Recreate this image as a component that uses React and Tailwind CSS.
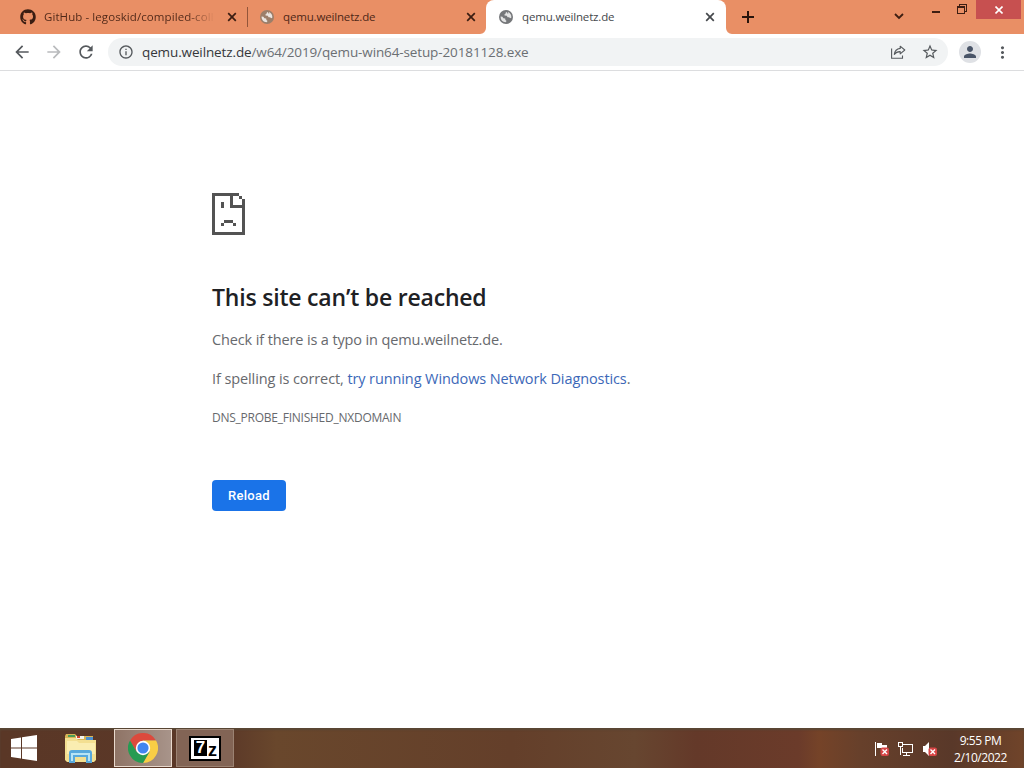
import React from 'react';
import { FaGithub } from 'react-icons/fa';
import {
  MdArrowBack,
  MdArrowForward,
  MdInfoOutline,
  MdMoreVert,
  MdPerson,
  MdRefresh,
  MdStarOutline,
} from 'react-icons/md';

const Globe = ({ className }) => (
  <svg viewBox="0 0 14 14" className={className}>
    <circle cx="7" cy="7" r="7" fill="currentColor" />
    <path
      d="M8 1.9C7 2.2 6.3 2.9 6.5 3.9L5.3 4.6L5.6 5.6L7.8 5.8L8.6 7.2H10.2L11 8.3L12.3 7.8C12.7 5.2 11.2 2.8 8.9 2L9.4 3.4L8.4 3.6ZM1.6 6.5C1.4 9.6 3.4 12 6.6 12.3L7.6 10.9L6.4 10L6.2 8.4L4.4 8.2L3.4 6.8Z"
      fill="#fff"
      fillOpacity="0.8"
    />
  </svg>
);

const SadFile = () => (
  <svg width="33" height="42" viewBox="0 0 11 14" fill="#535353" shapeRendering="crispEdges">
    <path d="M0 0H9V1H7V4H11V5H6V1H1V13H10V5H11V14H0Z" />
    <path d="M9 1H10V2H9ZM10 2H11V5H10Z" />
    <path d="M3 3H4V5H3ZM4 9H7V10H4ZM3 10H4V11H3ZM7 10H8V11H7Z" />
  </svg>
);

const CloseTab = () => (
  <svg width="10" height="10" viewBox="0 0 10 10" stroke="currentColor" strokeWidth="1.7">
    <path d="M1.2 1.2L8.8 8.8M8.8 1.2L1.2 8.8" />
  </svg>
);

const TabStrip = () => (
  <div className="flex h-[34px] bg-[#e98f65] text-[11.5px] text-[#4f2717]">
    <div className="flex h-[34px] w-[247px] items-center pl-5">
      <FaGithub className="size-4 text-[#3a1d12]" />
      <div className="ml-2 w-[174px] whitespace-nowrap bg-gradient-to-r from-[#4f2717] from-82% to-[#e98f65] to-98% bg-clip-text text-transparent tracking-[0.08px]">
        GitHub - legoskid/compiled-coll
      </div>
      <div className="ml-[9px] text-[#3a1d12]">
        <CloseTab />
      </div>
    </div>
    <div className="mt-[7px] h-5 w-px bg-[#92553a]" />
    <div className="flex h-[34px] w-[238px] items-center pl-3">
      <Globe className="size-[14px] text-[#9c7e69]" />
      <div className="ml-[9px] w-[183px] tracking-[-0.16px]">qemu.weilnetz.de</div>
      <div className="text-[#3a1d12]">
        <CloseTab />
      </div>
    </div>
    <div className="relative flex h-[34px] w-[240px] items-center rounded-t-lg bg-white pl-[13px] text-[#45484c]">
      <svg className="absolute bottom-0 -left-1.5" width="6" height="6" fill="#fff">
        <path d="M6 0V6H0A6 6 0 0 0 6 0Z" />
      </svg>
      <svg className="absolute -right-1.5 bottom-0" width="6" height="6" fill="#fff">
        <path d="M0 0V6H6A6 6 0 0 1 0 0Z" />
      </svg>
      <Globe className="size-[14px] text-[#75777a]" />
      <div className="ml-[9px] w-[183px] tracking-[-0.16px]">qemu.weilnetz.de</div>
      <CloseTab />
    </div>
    <div className="flex w-11 items-center justify-center text-[#28140c]">
      <svg width="12" height="12" viewBox="0 0 12 12" stroke="currentColor" strokeWidth="2">
        <path d="M6 0V12M0 6H12" />
      </svg>
    </div>
    <div className="ml-auto flex text-[#3d1e12]">
      <svg className="mt-[13px] mr-7" width="10" height="7" fill="none" stroke="currentColor" strokeWidth="1.8">
        <path d="M1 1L5 5L9 1" />
      </svg>
      <div className="mt-[11px] mr-[17px] h-[2px] w-2 bg-[#3d1e12]" />
      <svg className="mt-1 mr-[9px]" width="10" height="10" fill="none" stroke="currentColor" shapeRendering="crispEdges">
        <path d="M.5 2.5H7.5V9.5H.5ZM.5 3.5H7.5M2.5 2V.5H9.5V7.5H8" />
      </svg>
      <div className="mr-[3px] flex h-[19px] w-[45px] items-center justify-center bg-[#c75050] text-white">
        <svg width="8" height="8" stroke="currentColor" strokeWidth="1.6">
          <path d="M.5 .5L7.5 7.5M7.5 .5L.5 7.5" />
        </svg>
      </div>
    </div>
  </div>
);

const Toolbar = () => (
  <div className="flex h-[37px] items-center border-b border-[#dcdddf] bg-white pl-3 text-[#55595d]">
    <MdArrowBack className="size-5" />
    <MdArrowForward className="ml-3 size-5 text-[#b9bbbd]" />
    <MdRefresh className="ml-3 size-5" />
    <div className="ml-3 flex h-7 w-[840px] items-center rounded-full bg-[#f1f3f4] pl-[10px]">
      <MdInfoOutline className="size-4" />
      <div className="ml-2 text-[13.5px] text-[#6b6f73] tracking-[-0.12px]">
        <span className="text-[#35373a]">qemu.weilnetz.de</span>/w64/2019/qemu-win64-setup-20181128.exe
      </div>
      <svg className="mr-[15px] ml-auto" width="16" height="16" viewBox="0 0 16 16" fill="none" stroke="currentColor" strokeWidth="1.1">
        <path d="M1.6 4.5V14.2H12.5V11.5" />
        <path d="M10.2 2.2L14.8 6L10.2 9.8V7.6C7.6 7.5 5.7 8.4 4.3 10.4C4.7 7 6.7 4.8 10.2 4.4Z" strokeLinejoin="round" />
      </svg>
      <MdStarOutline className="mr-[9px] size-[18px]" />
    </div>
    <div className="ml-[11px] flex size-[22px] items-center justify-center rounded-full bg-[#dfe1e5]">
      <MdPerson className="size-[18px] text-[#4a5568]" />
    </div>
    <MdMoreVert className="ml-3 size-[19px]" />
  </div>
);

const ErrorPage = () => (
  <div className="flex h-[657px] flex-col items-start bg-white pt-[122px] pl-[212px] text-[#67696d]">
    <SadFile />
    <h1 className="mt-[46px] h-8 text-[23px] leading-8 font-semibold whitespace-nowrap text-[#202124] tracking-[-0.2px]">
      This site can’t be reached
    </h1>
    <p className="mt-[15px] h-6 text-[14.5px] leading-6 whitespace-nowrap tracking-[-0.13px]">
      Check if there is a typo in qemu.weilnetz.de.
    </p>
    <p className="mt-[15px] h-6 text-[14.5px] leading-6 whitespace-nowrap tracking-[-0.1px]">
      If spelling is correct, <span className="text-[#3c68b8]">try running Windows Network Diagnostics</span>.
    </p>
    <p className="mt-[15px] h-6 text-xs leading-6 whitespace-nowrap tracking-[-0.25px]">DNS_PROBE_FINISHED_NXDOMAIN</p>
    <button className="mt-[50px] h-[31px] w-[74px] rounded bg-[#1a73e8] font-['Roboto',sans-serif] text-[13px] font-medium text-white tracking-[0.3px]">
      Reload
    </button>
  </div>
);

const ExplorerIcon = () => (
  <svg width="34" height="32" viewBox="0 0 34 32">
    <path d="M1 4L2 2H11L13 4H29V9H1Z" fill="#d9b456" />
    <path d="M4 3H11V5H4Z" fill="#4b9b57" />
    <path d="M12 4H20V7H12Z" fill="#f4f5ee" />
    <path d="M13 4H16V6H13Z" fill="#cf4430" />
    <path d="M22 5H29V8H22Z" fill="#4d91cf" />
    <path d="M1 6H12L14 8H32V28L30 30H3L1 28Z" fill="#f3df91" />
    <path d="M3 9H13L15 11H31V22H3Z" fill="#faedb1" />
    <path d="M5 31V21Q5 18 8 18H25Q28 18 28 21V31H22V25H11V31Z" fill="#58a9dc" />
    <path d="M7 29V21H26V29H24V23H9V29Z" fill="#b7e4f5" />
  </svg>
);

const ChromeIcon = () => (
  <svg width="30" height="30" viewBox="0 0 30 30">
    <path d="M2 7.5A15 15 0 0 1 28 7.5H15L8.5 18.8Z" fill="#dc4a3d" />
    <path d="M28 7.5A15 15 0 0 1 15 30L21.5 18.8L15 7.5Z" fill="#f9ce45" />
    <path d="M2 7.5A15 15 0 0 0 15 30L21.5 18.8H8.5Z" fill="#269b52" />
    <circle cx="15" cy="15" r="7.2" fill="#fff" />
    <circle cx="15" cy="15" r="5.6" fill="#4286f0" />
  </svg>
);

const RedCross = () => (
  <g>
    <rect x="6.5" y="6.5" width="8.5" height="8.5" rx="2" fill="#d64545" />
    <path d="M8.5 8.5L13 13M13 8.5L8.5 13" stroke="#fff" strokeWidth="1.4" />
  </g>
);

const Taskbar = () => (
  <div className="flex h-10 items-center bg-linear-[90deg,#5a3726_0%,#5b3828_22%,#69472c_27%,#643f2a_50%,#674630_62%,#643929_68%,#6b3b2a_78%,#754328_80%,#67402b_84%,#593829_93%,#70442a_100%] shadow-[inset_0_2px_2px_#594735]">
    <svg className="ml-[10px]" width="27" height="26" viewBox="0 0 27 26" fill="#fff">
      <path d="M1 4L11 2.5V12.5H1ZM12 2.3L27 0V12.5H12ZM1 13.5H11V23.5L1 22ZM12 13.5H27V26L12 23.7Z" />
    </svg>
    <div className="ml-[27px]">
      <ExplorerIcon />
    </div>
    <div className="ml-4 flex h-[38px] w-[58px] items-center justify-center border border-[#e9d9cd] bg-linear-[90deg,#8f7466,#a8948a]">
      <ChromeIcon />
    </div>
    <div className="ml-1 flex h-[38px] w-[58px] items-center justify-center border border-[#9b8272] bg-[#826455]">
      <div className="flex h-[25px] w-8 items-center border-2 border-black bg-white pl-[3px]">
        <div className="flex h-4 w-[13px] items-center justify-center bg-black font-['Liberation_Sans',sans-serif] text-[17px] leading-4 font-bold text-white">
          7
        </div>
        <div className="mt-[3px] ml-px font-['Liberation_Sans',sans-serif] text-lg leading-4 font-bold text-black">z</div>
      </div>
    </div>
    <div className="ml-auto flex items-center text-white">
      <svg className="mt-px mr-2" width="16" height="16">
        <path d="M1.5 1V15" stroke="#fff" />
        <path d="M3 2H8V4H13V9H8V7H3Z" fill="#fff" />
        <RedCross />
      </svg>
      <svg className="mt-px mr-2" width="16" height="16" fill="none" stroke="#fff" shapeRendering="crispEdges">
        <path d="M5 3.5H14.5V11.5H4.5V7M8.5 12V14M5 14.5H12M.5 1.5H4.5V5.5H.5ZM2.5 6V14" />
      </svg>
      <svg className="mt-px mr-[15px]" width="16" height="16">
        <path d="M1 5H3L7 1V15L3 11H1Z" fill="#fff" />
        <RedCross />
      </svg>
      <div className="mt-0.5 mr-4 w-[55px] text-center text-xs leading-[17px] whitespace-nowrap tracking-[-0.45px]">
        <div>9:55 PM</div>
        <div>2/10/2022</div>
      </div>
    </div>
  </div>
);

const App = () => {
  return (
    <div className="h-[768px] w-[1024px] overflow-hidden bg-white font-['Open_Sans','Noto_Sans',sans-serif]">
      <TabStrip />
      <Toolbar />
      <ErrorPage />
      <Taskbar />
    </div>
  );
};

export default App;
